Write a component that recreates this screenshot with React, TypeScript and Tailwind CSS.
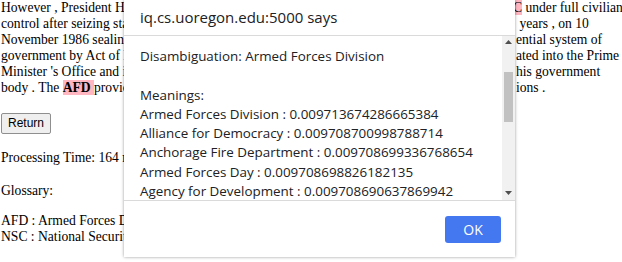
import React from "react";

type Line = { left: React.ReactNode; right: React.ReactNode; clip: number };

const paragraph: Line[] = [
  {
    left: (
      <>
        However , President Hussain Muhammad Ershad placed the <mark className="bg-[#ffb6c1] text-black">NS</mark>
      </>
    ),
    right: (
      <>
        <mark className="bg-[#ffb6c1] text-black">C</mark> under full civilian
      </>
    ),
    clip: 513,
  },
  { left: "control after seizing state power in 1982 and , after ruling for four", right: " years , on 10", clip: 516 },
  { left: "November 1986 sealing the return to a constitutional and pres", right: "ential system of", clip: 516 },
  { left: "government by Act of Parliament ; the AFD was later incorpor", right: "ated into the Prime", clip: 516 },
  { left: "Minister 's Office and it now serves as the secretariat of t", right: "his government", clip: 516 },
  {
    left: (
      <>
        body . The <b className="bg-[#ffb6c1]">AFD </b>provides coordination for joint operat
      </>
    ),
    right: "ions .",
    clip: 516,
  },
];

const meanings = [
  ["Armed Forces Division", "0.009713674286665384"],
  ["Alliance for Democracy", "0.009708700998788714"],
  ["Anchorage Fire Department", "0.009708699336768654"],
  ["Armed Forces Day", "0.009708698826182135"],
  ["Agency for Development", "0.009708690637869942"],
];

function Page() {
  return (
    <div className="pl-px font-['Liberation_Serif',serif] text-[13.6px] leading-[16.1px]">
      <div>
        {paragraph.map((line, i) => (
          <div key={i} className="flex whitespace-pre">
            <span className="shrink-0 overflow-hidden" style={{ width: line.clip - 1 }}>
              {line.left}
            </span>
            <span>{line.right}</span>
          </div>
        ))}
      </div>
      <button className="mt-[16px] rounded-[2px] border border-[#8f8f8f] bg-[#efefef] px-[6px] py-px font-['Liberation_Sans',sans-serif] text-[12px] leading-[17px] text-black">
        Return
      </button>
      <div className="mt-[16px]">Processing Time: 164 ms</div>
      <div className="mt-[17px]">Glossary:</div>
      <div className="mt-[14px]">AFD : Armed Forces Division</div>
      <div>NSC : National Security Council</div>
    </div>
  );
}

function AlertDialog() {
  return (
    <div className="absolute left-[124px] top-0 flex h-[257px] w-[391px] flex-col bg-white font-['Open_Sans',sans-serif] text-[#202124] shadow-[0_0_3px_rgba(0,0,0,0.4)]">
      <div className="flex h-[36px] shrink-0 items-center border-b border-[#dadada] pl-[16px] text-[15px]">
        iq.cs.uoregon.edu:5000 says
      </div>
      <div className="flex h-[164px] shrink-0">
        <div className="flex-1 overflow-hidden pl-[16px] pt-[11px] text-[13.4px] leading-[19.3px]">
          <div>Disambiguation: Armed Forces Division</div>
          <div>&nbsp;</div>
          <div>Meanings:</div>
          {meanings.map(([name, score]) => (
            <div key={name} className="whitespace-nowrap">
              {name} : {score}
            </div>
          ))}
        </div>
        <div className="flex w-[13px] shrink-0 flex-col items-center bg-[#f1f1f1]">
          <svg width="7" height="4" viewBox="0 0 7 4" className="mt-[4px]">
            <path d="M0 4 L3.5 0 L7 4 Z" fill="#505050" />
          </svg>
          <div className="mt-[28px] h-[50px] w-[9px] bg-[#c1c1c1]" />
          <div className="flex-1" />
          <svg width="7" height="4" viewBox="0 0 7 4" className="mb-[5px]">
            <path d="M0 0 L7 0 L3.5 4 Z" fill="#505050" />
          </svg>
        </div>
      </div>
      <div className="flex flex-1 items-start justify-end border-t border-[#dadada] pr-[14px] pt-[15px]">
        <button className="h-[27px] w-[56px] rounded-[3px] bg-[#4478f0] text-[14px] text-white">OK</button>
      </div>
    </div>
  );
}

export default function App() {
  return (
    <div className="relative h-[262px] w-[622px] overflow-hidden bg-white text-black">
      <Page />
      <AlertDialog />
    </div>
  );
}
